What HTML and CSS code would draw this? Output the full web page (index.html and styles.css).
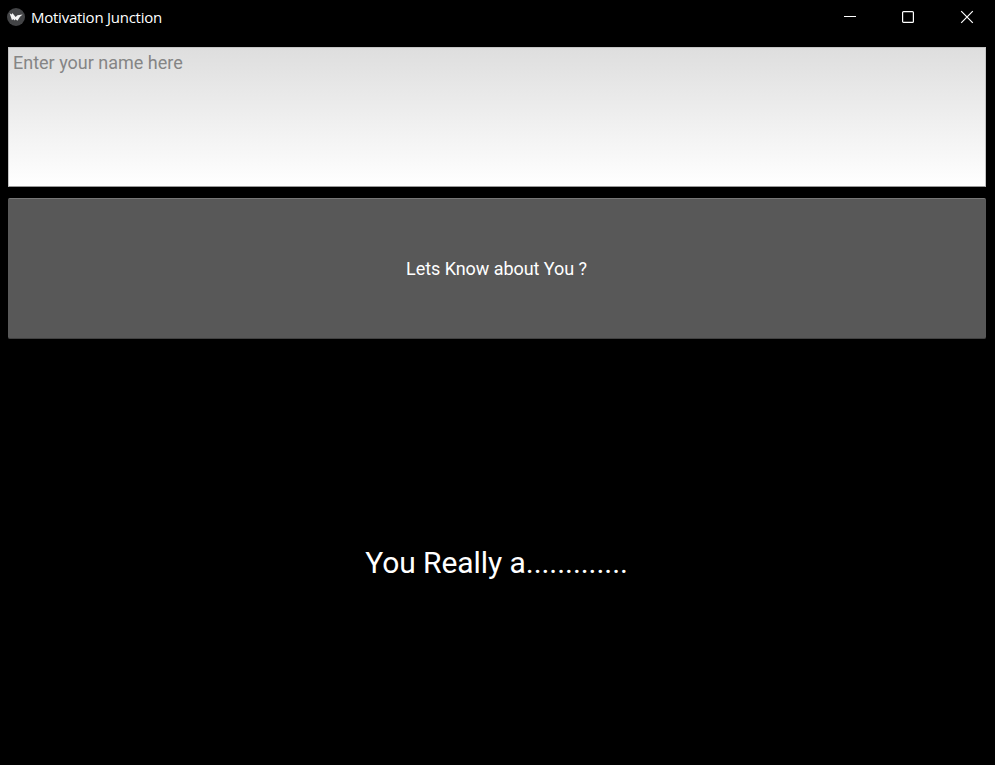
FILE: index.html
```
<!DOCTYPE html>
<html lang="en">
<head>
<meta charset="utf-8">
<title>Motivation Junction</title>
<link rel="stylesheet" href="styles.css">
</head>
<body>
<header class="titlebar">
  <svg class="logo" width="18" height="18" viewBox="0 0 18 18"><circle cx="9" cy="9" r="9" fill="#434446"/><path d="M2.6 5.2 4.8 6.6 5.4 5 8.6 9 10.5 7.2 15.6 6.5 13 8.8 10.4 12.8 8.4 11.2 7.5 12.6 6.2 11 5 12.2Z" fill="#f4f4f4"/></svg>
  <span class="title">Motivation Junction</span>
  <nav class="controls">
    <svg width="14" height="14" viewBox="0 0 14 14"><path d="M1 6.5H13" stroke="#fff"/></svg>
    <svg width="14" height="14" viewBox="0 0 14 14"><rect x="1.6" y="1.6" width="10.8" height="10.8" rx="1" fill="none" stroke="#fff" stroke-width="1.2"/></svg>
    <svg class="close" width="14" height="14" viewBox="0 0 14 14"><path d="M1.2 1.2 12.8 12.8M12.8 1.2 1.2 12.8" stroke="#fff" stroke-width="1.2"/></svg>
  </nav>
</header>
<main class="content">
  <div class="name-input">Enter your name here</div>
  <div class="button">Lets Know about You ?</div>
  <div class="result">You Really a.............</div>
</main>
</body>
</html>
```

FILE: styles.css
```
* { box-sizing: border-box; }
body { margin: 0; height: 765px; background: #000; color: #fff; font-family: Roboto, sans-serif; display: flex; flex-direction: column; overflow: hidden; }
.titlebar { height: 47px; flex: none; display: flex; align-items: flex-start; padding: 8px 21px 0 7px; }
.logo { flex: none; }
.title { margin: -1px 0 0 6px; font: 15px/20px "Open Sans", sans-serif; letter-spacing: -0.25px; white-space: nowrap; }
.controls { margin: 2px 0 0 auto; display: flex; gap: 44px; }
.close { margin-left: 1px; }
.content { flex: 1; display: flex; flex-direction: column; padding: 0 9px 0 8px; }
.name-input { height: 140px; flex: none; padding: 4px 4px; font-size: 18px; line-height: 22px; color: #858585; border: 1px solid #c4c4c4; border-bottom-color: #999; background: linear-gradient(#dedede, #fff); }
.button { height: 141px; flex: none; margin-top: 11px; padding-right: 1px; display: flex; align-items: center; justify-content: center; font-size: 18px; letter-spacing: -0.06px; background: #585858; border-top: 1px solid #777; border-bottom: 1px solid #414141; border-radius: 2px; }
.result { flex: 1; display: flex; align-items: center; justify-content: center; font-size: 30px; letter-spacing: -0.06px; padding: 20px 1px 0 0; }
```
